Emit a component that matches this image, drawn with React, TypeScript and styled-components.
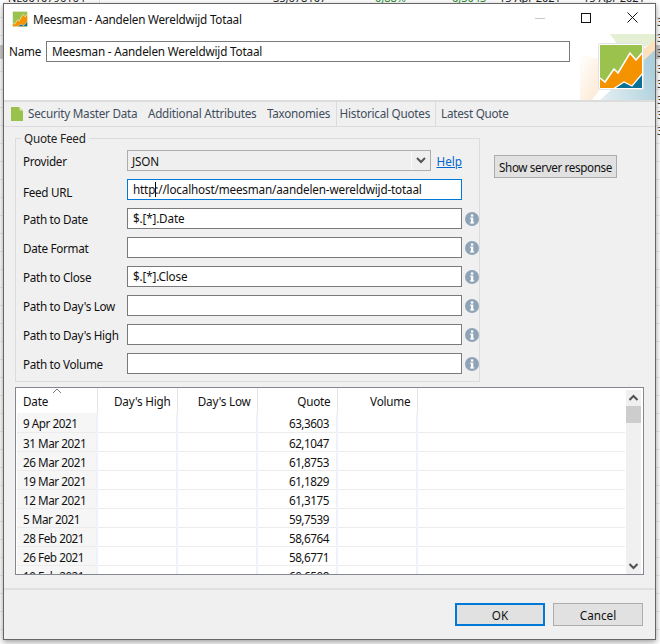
import React from "react";
import styled, { createGlobalStyle } from "styled-components";

const Global = createGlobalStyle`
  html, body { margin: 0; padding: 0; background: #fff; }
  body { font-family: "Noto Sans", "Open Sans", sans-serif; font-size: 11.7px; color: #111; }
  #root { width: 660px; height: 644px; overflow: hidden; }
`;

const Desktop = styled.div`
  position: relative;
  width: 660px;
  height: 644px;
  padding: 3px 0 0 3px;
  box-sizing: border-box;
  overflow: hidden;
  background:
    repeating-linear-gradient(90deg, transparent 0, transparent 99px, #e4e4e4 99px, #e4e4e4 100px, transparent 100px, transparent 179px) 0 0 / 100% 3px no-repeat,
    linear-gradient(#cbcbcb, #cbcbcb) 0 45px / 100% 14px no-repeat,
    repeating-linear-gradient(#fff 0, #fff 17px, #ececec 17px, #ececec 18px);
`;
const BackdropTop = styled.div`
  position: absolute;
  top: -9px;
  left: 8px;
  font-size: 11px;
  line-height: 14px;
  white-space: nowrap;
`;
const BackdropCell = styled.span<{ $x: number; $color?: string }>`
  position: absolute;
  left: ${(p) => p.$x}px;
  color: ${(p) => p.$color ?? "#222"};
`;
const BackdropSide = styled.div`
  position: absolute;
  left: 657px;
  top: 14px;
  width: 3px;
  overflow: hidden;
  font-size: 11px;
  line-height: 15.5px;
  color: #333;
`;
const Dialog = styled.div`
  position: relative;
  width: 653px;
  height: 637px;
  box-sizing: border-box;
  border: 1px solid #666;
  background: #f0f0f0;
  box-shadow: 0 2px 6px rgba(0, 0, 0, 0.4);
  display: flex;
  flex-direction: column;
`;
const TitleBar = styled.div`
  height: 29px;
  flex: none;
  background: #fff;
  display: flex;
  align-items: center;
  padding-left: 8px;
`;
const TitleIcon = styled.svg`
  width: 16px;
  height: 16px;
  margin: 1px 5px 0 0;
  flex: none;
`;
const TitleText = styled.div`
  flex: 1;
  letter-spacing: -0.2px;
  color: #111;
`;
const WinButton = styled.div`
  width: 46px;
  height: 29px;
  display: flex;
  align-items: center;
  justify-content: center;
  margin-top: -2px;
`;
const Header = styled.div`
  height: 67px;
  flex: none;
  background: #fff;
  display: flex;
  border-bottom: 2px solid #dcdcdc;
  box-sizing: content-box;
`;
const NameRow = styled.div`
  flex: 1;
  display: flex;
  align-items: flex-start;
  padding: 8px 0 0 5px;
  gap: 5px;
`;
const NameLabel = styled.label`
  width: 32px;
  line-height: 21px;
  letter-spacing: -0.2px;
`;
const Field = styled.div<{ $focused?: boolean; $width?: number }>`
  height: 21px;
  box-sizing: border-box;
  width: ${(p) => (p.$width ? `${p.$width}px` : "100%")};
  border: 1px solid ${(p) => (p.$focused ? "#0078d7" : "#7a7a7a")};
  background: #fff;
  padding: 0 5px;
  line-height: 19px;
  letter-spacing: -0.16px;
  white-space: nowrap;
  color: #111;
`;
const Caret = styled.span`
  display: inline-block;
  width: 0;
  height: 15px;
  border-left: 1px solid #000;
  margin-right: -1px;
  vertical-align: -3px;
`;
const Banner = styled.svg`
  width: 75px;
  height: 66px;
  flex: none;
  align-self: flex-start;
  margin-top: 1px;
`;
const TabBar = styled.div`
  height: 24px;
  flex: none;
  display: flex;
  align-items: stretch;
  padding-left: 2px;
  border-bottom: 1px solid #dcdcdc;
  color: #3f4d5c;
`;
const Tab = styled.div<{ $active?: boolean }>`
  display: flex;
  align-items: center;
  padding: 0 5px 2px ${(p) => (p.$active ? 3 : 5)}px;
  margin-right: ${(p) => (p.$active ? 0 : 0.5)}px;
  letter-spacing: -0.24px;
  box-sizing: border-box;
  ${(p) => (p.$active ? "border-left: 1px solid #dcdcdc; border-right: 1px solid #dcdcdc;" : "")}
`;
const TabIcon = styled.svg`
  width: 12px;
  height: 14px;
  margin-right: 5px;
  margin-top: 2px;
`;
const Panel = styled.div`
  flex: 1;
  min-height: 0;
  padding: 3px 11px 0;
  display: flex;
  flex-direction: column;
`;
const TopRow = styled.div`
  display: flex;
  gap: 14px;
  align-items: flex-start;
`;
const Group = styled.fieldset`
  width: 465px;
  box-sizing: border-box;
  margin: 0;
  padding: 4px 0 7px 7px;
  border: 1px solid #dcdcdc;
  display: flex;
  flex-direction: column;
  gap: 8px;
`;
const Legend = styled.legend`
  margin-left: -2px;
  padding: 0 3px;
  line-height: 16px;
  letter-spacing: -0.2px;
  color: #222;
`;
const FormRow = styled.div`
  display: grid;
  grid-template-columns: 104px 335px 14px;
  align-items: center;
  height: 21px;
`;
const FormLabel = styled.label<{ $drop?: number }>`
  letter-spacing: -0.3px;
  color: #111;
  margin-top: ${(p) => p.$drop ?? 1}px;
`;
const ProviderCell = styled.div`
  grid-column: 2 / 3;
  display: flex;
  align-items: center;
  gap: 6px;
`;
const Combo = styled.div`
  width: 304px;
  height: 21px;
  box-sizing: border-box;
  border: 1px solid #adadad;
  background: #efefef;
  display: flex;
  align-items: center;
  padding-left: 4px;
  letter-spacing: -0.2px;
`;
const ComboText = styled.span`
  flex: 1;
`;
const ComboArrow = styled.span`
  width: 18px;
  height: 19px;
  border-left: 1px solid #fafafa;
  display: flex;
  align-items: center;
  justify-content: center;
`;
const HelpLink = styled.a`
  color: #0066cc;
  text-decoration: underline;
`;
const InfoIcon = styled.svg`
  width: 14px;
  height: 14px;
  margin-left: 3px;
`;
const PushButton = styled.button<{ $primary?: boolean }>`
  font: inherit;
  color: #111;
  background: #e1e1e1;
  border: ${(p) => (p.$primary ? "2px solid #0078d7" : "1px solid #adadad")};
  padding: 0;
  height: 23px;
  box-sizing: border-box;
`;
const ServerButton = styled(PushButton)`
  width: 123px;
  margin-top: 25px;
  letter-spacing: -0.38px;
`;
const TableFrame = styled.div`
  flex: none;
  margin-top: 5px;
  height: 188px;
  width: 629px;
  box-sizing: border-box;
  border: 1px solid #828790;
  background: #fff;
  display: flex;
  overflow: hidden;
`;
const TableClip = styled.div`
  flex: 1;
  overflow: hidden;
  padding-left: 1px;
`;
const Table = styled.table`
  border-collapse: collapse;
  table-layout: fixed;
  width: 608px;
`;
const HeadRow = styled.tr`
  height: 25px;
`;
const HeadCell = styled.th<{ $left?: boolean }>`
  position: relative;
  font-weight: 400;
  padding: 0 ${(p) => (p.$left ? 0 : 6)}px 0 ${(p) => (p.$left ? 6 : 0)}px;
  text-align: ${(p) => (p.$left ? "left" : "right")};
  border-right: 1px solid #e5e5e5;
  letter-spacing: -0.2px;
  color: #111;
`;
const FillerHead = styled.th``;
const SortMark = styled.svg`
  position: absolute;
  left: 35px;
  top: 0;
  width: 10px;
  height: 6px;
`;
const Row = styled.tr`
  height: 19px;
  border-bottom: 1px solid #ececec;
`;
const DateCell = styled.td`
  background: #f6f6f6;
  padding: 3px 0 0 6px;
  border-right: 2px solid #eef2fb;
  letter-spacing: -0.45px;
  line-height: 15px;
`;
const NumCell = styled.td`
  padding: 3px 7px 0 0;
  text-align: right;
  border-right: 2px solid #eef2fb;
  letter-spacing: -0.45px;
  line-height: 15px;
`;
const BlankCell = styled.td``;
const ScrollBar = styled.div`
  width: 15px;
  margin: 2px 2px 0 0;
  background: #f0f0f0;
  display: flex;
  flex-direction: column;
  align-items: center;
`;
const ScrollArrow = styled.svg`
  width: 15px;
  height: 16px;
  flex: none;
`;
const ScrollThumb = styled.div`
  width: 15px;
  height: 17px;
  background: #cdcdcd;
`;
const ScrollTrack = styled.div`
  flex: 1;
`;
const Footer = styled.div`
  height: 36px;
  flex: none;
  border-top: 2px solid #e0e0e0;
  display: flex;
  justify-content: flex-end;
  align-items: flex-start;
  gap: 8px;
  padding: 13px 12px 0 0;
`;
const DialogButton = styled(PushButton)`
  width: 90px;
`;

const Logo = () => (
  <>
    <rect x="18.5" y="9.5" width="45" height="46" rx="2" fill="#fff" stroke="#dfe3e3" />
    <rect x="20" y="11" width="42" height="43" fill="#9bc24c" />
    <polygon points="20,44 25,48 34,35 38,39 50,19 56,26 62,19 62,54 20,54" fill="#f49200" />
    <polyline points="20,44 25,48 34,35 38,39 50,19 56,26 62,19" fill="none" stroke="#fff" strokeWidth="1.6" />
    <polygon points="35,54 44,48 52,52 62,40 62,54" fill="#0a7095" />
    <polyline points="34,54.5 44,48 52,52 62,40" fill="none" stroke="#fff" strokeWidth="1.2" />
  </>
);

const Info = () => (
  <InfoIcon viewBox="0 0 14 14">
    <circle cx="7" cy="7" r="7" fill="#8fa3b6" />
    <rect x="5.9" y="2.4" width="2.4" height="2.2" fill="#fff" />
    <rect x="5.9" y="5.6" width="2.4" height="5.8" fill="#fff" />
    <rect x="4.9" y="5.6" width="1.2" height="1" fill="#fff" />
    <rect x="4.9" y="10.4" width="4.4" height="1" fill="#fff" />
  </InfoIcon>
);

const Chevron = ({ up, color = "#505050" }: { up?: boolean; color?: string }) => (
  <ScrollArrow viewBox="0 0 15 16">
    <polyline
      points={up ? "3.5,10 7.5,6 11.5,10" : "3.5,6 7.5,10 11.5,6"}
      fill="none"
      stroke={color}
      strokeWidth="2"
    />
  </ScrollArrow>
);

const rows: [string, string][] = [
  ["9 Apr 2021", "63,3603"],
  ["31 Mar 2021", "62,1047"],
  ["26 Mar 2021", "61,8753"],
  ["19 Mar 2021", "61,1829"],
  ["12 Mar 2021", "61,3175"],
  ["5 Mar 2021", "59,7539"],
  ["28 Feb 2021", "58,6764"],
  ["26 Feb 2021", "58,6771"],
  ["19 Feb 2021", "60,6508"],
];

const fields: [string, string][] = [
  ["Path to Date", "$.[*].Date"],
  ["Date Format", ""],
  ["Path to Close", "$.[*].Close"],
  ["Path to Day's Low", ""],
  ["Path to Day's High", ""],
  ["Path to Volume", ""],
];

export default function App() {
  return (
    <Desktop>
      <Global />
      <BackdropTop>
        <BackdropCell $x={0}>NL0010796164</BackdropCell>
        <BackdropCell $x={265}>35,678107</BackdropCell>
        <BackdropCell $x={367} $color="#1a8a2a">0,88%</BackdropCell>
        <BackdropCell $x={444} $color="#1a8a2a">0,3043</BackdropCell>
        <BackdropCell $x={491}>15 Apr 2021</BackdropCell>
        <BackdropCell $x={575}>15 Apr 2021</BackdropCell>
      </BackdropTop>
      <BackdropSide>
        3<br />3<br />3<br />3<br />3<br />3<br />3<br />3
      </BackdropSide>
      <Dialog>
        <TitleBar>
          <TitleIcon viewBox="18 9 46 47">
            <Logo />
          </TitleIcon>
          <TitleText>Meesman - Aandelen Wereldwijd Totaal</TitleText>
          <WinButton>
            <svg width="10" height="10" viewBox="0 0 10 10">
              <line x1="0" y1="5.5" x2="10" y2="5.5" stroke="#c8c8c8" />
            </svg>
          </WinButton>
          <WinButton>
            <svg width="10" height="10" viewBox="0 0 10 10">
              <rect x="0.5" y="0.5" width="9" height="9" fill="none" stroke="#111" />
            </svg>
          </WinButton>
          <WinButton>
            <svg width="11" height="11" viewBox="0 0 11 11">
              <path d="M0.5 0.5 L10.5 10.5 M10.5 0.5 L0.5 10.5" stroke="#111" fill="none" />
            </svg>
          </WinButton>
        </TitleBar>
        <Header>
          <NameRow>
            <NameLabel>Name</NameLabel>
            <Field $width={524}>Meesman - Aandelen Wereldwijd Totaal</Field>
          </NameRow>
          <Banner viewBox="0 0 75 66">
            <defs>
              <linearGradient id="peach" x1="0" y1="0" x2="1" y2="0.6">
                <stop offset="0" stopColor="#fff" />
                <stop offset="0.6" stopColor="#fdeedd" />
                <stop offset="1" stopColor="#fde6cc" />
              </linearGradient>
              <linearGradient id="sky" x1="0" y1="1" x2="1" y2="0.6">
                <stop offset="0" stopColor="#e6eff3" />
                <stop offset="1" stopColor="#aed0dd" />
              </linearGradient>
            </defs>
            <rect width="75" height="66" fill="#fff" />
            <polygon points="0,20 38,30 12,66 0,66" fill="url(#peach)" />
            <polygon points="30,0 75,0 75,8 62,14 40,14" fill="#e5efd3" />
            <polygon points="75,6 75,20 60,38 60,18" fill="#fde0bd" />
            <polygon points="75,16 75,66 20,66 62,28" fill="url(#sky)" />
            <Logo />
          </Banner>
        </Header>
        <TabBar>
          <Tab>
            <TabIcon viewBox="0 0 12 14">
              <path d="M0 0 H8 L12 4 V14 H0 Z" fill="#9ac14c" />
              <path d="M8.5 0 L12 3.5 H8.5 Z" fill="#d5e4ae" />
            </TabIcon>
            Security Master Data
          </Tab>
          <Tab>Additional Attributes</Tab>
          <Tab>Taxonomies</Tab>
          <Tab $active>Historical Quotes</Tab>
          <Tab>Latest Quote</Tab>
        </TabBar>
        <Panel>
          <TopRow>
            <Group>
              <Legend>Quote Feed</Legend>
              <FormRow>
                <FormLabel>Provider</FormLabel>
                <ProviderCell>
                  <Combo>
                    <ComboText>JSON</ComboText>
                    <ComboArrow>
                      <svg width="10" height="7" viewBox="0 0 10 7">
                        <polyline points="1,1 5,5 9,1" fill="none" stroke="#555" strokeWidth="2" />
                      </svg>
                    </ComboArrow>
                  </Combo>
                  <HelpLink href="#">Help</HelpLink>
                </ProviderCell>
              </FormRow>
              <FormRow>
                <FormLabel $drop={4}>Feed URL</FormLabel>
                <Field $focused>
                  http<Caret />://localhost/meesman/aandelen-wereldwijd-totaal
                </Field>
              </FormRow>
              {fields.map(([label, value]) => (
                <FormRow key={label}>
                  <FormLabel>{label}</FormLabel>
                  <Field>{value}</Field>
                  <Info />
                </FormRow>
              ))}
            </Group>
            <ServerButton>Show server response</ServerButton>
          </TopRow>
          <TableFrame>
            <TableClip>
              <Table>
                <colgroup>
                  <col width="80" />
                  <col width="80" />
                  <col width="80" />
                  <col width="80" />
                  <col width="80" />
                  <col />
                </colgroup>
                <thead>
                  <HeadRow>
                    <HeadCell $left>
                      <SortMark viewBox="0 0 10 6">
                        <polyline points="1,5 5,1 9,5" fill="none" stroke="#777" />
                      </SortMark>
                      Date
                    </HeadCell>
                    <HeadCell>Day's High</HeadCell>
                    <HeadCell>Day's Low</HeadCell>
                    <HeadCell>Quote</HeadCell>
                    <HeadCell>Volume</HeadCell>
                    <FillerHead />
                  </HeadRow>
                </thead>
                <tbody>
                  {rows.map(([d, q]) => (
                    <Row key={d}>
                      <DateCell>{d}</DateCell>
                      <NumCell />
                      <NumCell />
                      <NumCell>{q}</NumCell>
                      <NumCell />
                      <BlankCell />
                    </Row>
                  ))}
                </tbody>
              </Table>
            </TableClip>
            <ScrollBar>
              <Chevron up />
              <ScrollThumb />
              <ScrollTrack />
              <Chevron />
            </ScrollBar>
          </TableFrame>
        </Panel>
        <Footer>
          <DialogButton $primary>OK</DialogButton>
          <DialogButton>Cancel</DialogButton>
        </Footer>
      </Dialog>
    </Desktop>
  );
}
